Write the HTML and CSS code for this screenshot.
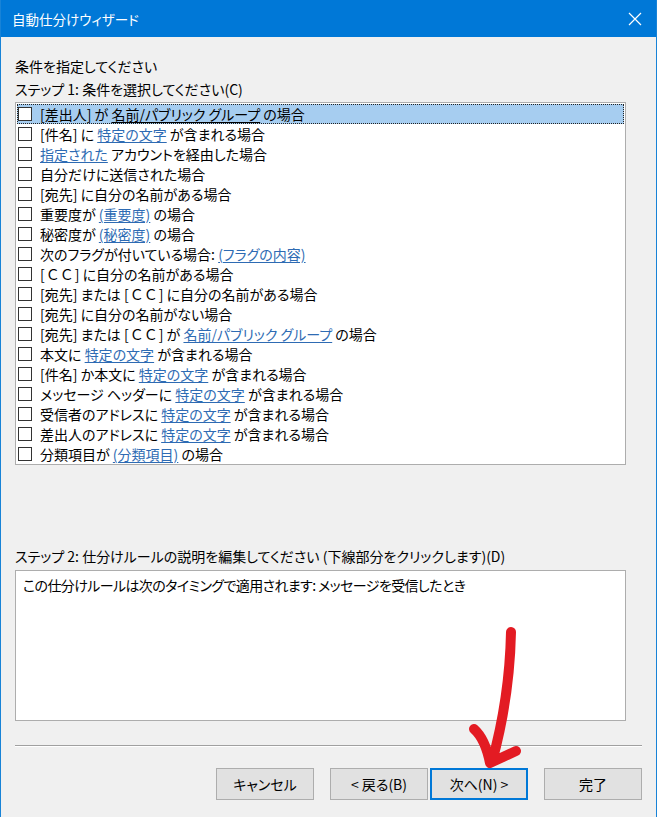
FILE: index.html
```html
<!DOCTYPE html>
<html lang="ja">
<head>
  <meta charset="UTF-8">
  <title>自動仕分けウィザード</title>
  <link rel="stylesheet" href="styles.css">
</head>
<body>
  <div class="window">
    <div class="titlebar">
      <span class="title">自動仕分けウィザード</span>
      <svg class="close" width="14" height="14" viewBox="0 0 14 14">
        <path d="M1 1 L13 13 M13 1 L1 13" stroke="#fff" stroke-width="1.2" fill="none"/>
      </svg>
    </div>

    <div class="content">
      <p class="label">条件を指定してください</p>
      <p class="label">ステップ 1: 条件を選択してください(C)</p>

      <ul class="conditions">
        <li class="selected"><span class="check"></span><span>[差出人] が <a>名前/パブリック グループ</a> の場合</span></li>
        <li><span class="check"></span><span>[件名] に <a>特定の文字</a> が含まれる場合</span></li>
        <li><span class="check"></span><span><a>指定された</a> アカウントを経由した場合</span></li>
        <li><span class="check"></span><span>自分だけに送信された場合</span></li>
        <li><span class="check"></span><span>[宛先] に自分の名前がある場合</span></li>
        <li><span class="check"></span><span>重要度が <a>(重要度)</a> の場合</span></li>
        <li><span class="check"></span><span>秘密度が <a>(秘密度)</a> の場合</span></li>
        <li><span class="check"></span><span>次のフラグが付いている場合: <a>(フラグの内容)</a></span></li>
        <li><span class="check"></span><span>[<span class="cc">ＣＣ</span>] に自分の名前がある場合</span></li>
        <li><span class="check"></span><span>[宛先] または [<span class="cc">ＣＣ</span>] に自分の名前がある場合</span></li>
        <li><span class="check"></span><span>[宛先] に自分の名前がない場合</span></li>
        <li><span class="check"></span><span>[宛先] または [<span class="cc">ＣＣ</span>] が <a>名前/パブリック グループ</a> の場合</span></li>
        <li><span class="check"></span><span>本文に <a>特定の文字</a> が含まれる場合</span></li>
        <li><span class="check"></span><span>[件名] か本文に <a>特定の文字</a> が含まれる場合</span></li>
        <li><span class="check"></span><span>メッセージ ヘッダーに <a>特定の文字</a> が含まれる場合</span></li>
        <li><span class="check"></span><span>受信者のアドレスに <a>特定の文字</a> が含まれる場合</span></li>
        <li><span class="check"></span><span>差出人のアドレスに <a>特定の文字</a> が含まれる場合</span></li>
        <li><span class="check"></span><span>分類項目が <a>(分類項目)</a> の場合</span></li>
      </ul>

      <p class="label step2">ステップ 2: 仕分けルールの説明を編集してください (下線部分をクリックします)(D)</p>
      <div class="description">この仕分けルールは次のタイミングで適用されます: メッセージを受信したとき</div>

      <div class="separator"></div>

      <div class="buttons">
        <button class="cancel">キャンセル</button>
        <button class="back">&lt; 戻る(B)</button>
        <button class="next default">次へ(N) &gt;</button>
        <button>完了</button>
      </div>
    </div>

    <!-- hand drawn arrow on top of the screenshot -->
    <svg class="annotation" width="657" height="817" viewBox="0 0 657 817">
      <path d="M511 632 C 510 680, 503 722, 492 762 M474 729 C 482 736, 487 748, 490 763 L 516 751"
            stroke="#e31b23" stroke-width="10" fill="none" stroke-linecap="round" stroke-linejoin="round"/>
    </svg>
  </div>
</body>
</html>
```

FILE: styles.css
```css
* {
  box-sizing: border-box;
}

body {
  margin: 0;
  font-family: "Noto Sans CJK JP", "Noto Sans", sans-serif;
  font-size: 14px;
  font-feature-settings: "palt";
  color: #000;
  background: #f0f0f0;
}

.window {
  position: relative;
  width: 657px;
  height: 817px;
  background: #f0f0f0;
  border-left: 1px solid #1883d7;
  border-right: 1px solid #1883d7;
  overflow: hidden;
}

.titlebar {
  height: 37px;
  background: #0078d7;
  color: #fff;
  display: flex;
  align-items: center;
  justify-content: space-between;
  padding: 0 14px 0 11px;
}

.title {
  font-size: 13.5px;
  line-height: 20px;
}

.content {
  padding: 19px 14px 0 14px;
}

.label {
  margin: 0 0 3px;
  line-height: 20px;
}

.conditions {
  list-style: none;
  margin: 2px 16px 0 0;
  padding: 1px 1px 0;
  background: #fff;
  border: 1px solid #adadad;
}

.conditions li {
  height: 20px;
  display: flex;
  align-items: center;
  gap: 8px;
  white-space: nowrap;
  line-height: 20px;
}

.conditions li.selected {
  background: #a6cdf0;
  outline: 1px dotted #222;
  outline-offset: -1px;
}

.check {
  width: 14px;
  height: 14px;
  margin-left: 1px;
  background: #fff;
  border: 1px solid #333;
  flex: none;
}

.cc {
  font-feature-settings: normal;
  padding: 0 1px;
}

.conditions a {
  color: #2e6bb3;
  text-decoration: underline;
  text-underline-offset: 2px;
}

.conditions li.selected a {
  color: #000;
}

.step2 {
  margin-top: 81px;
  margin-bottom: 4px;
}

.description {
  height: 151px;
  margin-right: 16px;
  padding: 4px 7px;
  background: #fff;
  border: 1px solid #adadad;
  line-height: 20px;
  letter-spacing: -0.6px;
}

.separator {
  margin-top: 24px;
  height: 2px;
  border-top: 1px solid #a0a0a0;
  border-bottom: 1px solid #fff;
}

.buttons {
  display: flex;
  justify-content: flex-end;
  margin-top: 21px;
}

button {
  width: 98px;
  height: 32px;
  font-family: inherit;
  font-size: 14px;
  font-feature-settings: "palt";
  color: #000;
  background: #e1e1e1;
  border: 1px solid #adadad;
  padding: 0;
}

button.cancel,
button.next {
  margin-right: 16px;
}

button.back {
  margin-right: 2px;
}

button.default {
  border: 2px solid #0078d7;
}

.annotation {
  position: absolute;
  left: -1px;
  top: 0;
  pointer-events: none;
}
```
